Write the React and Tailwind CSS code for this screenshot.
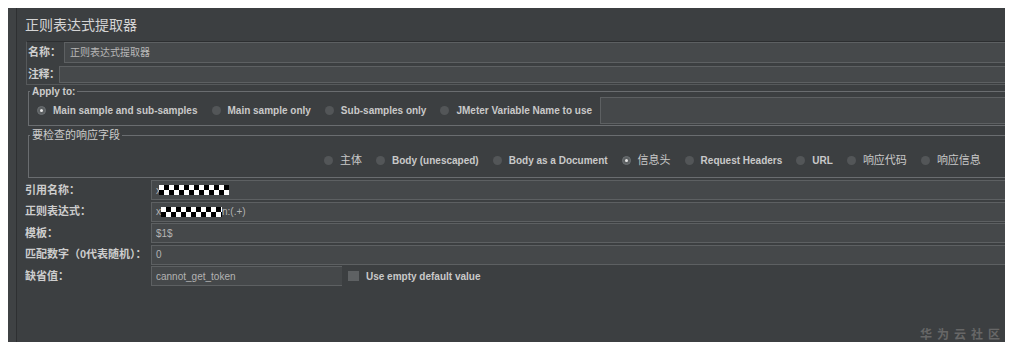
import React from "react";

function Radio({ checked }) {
  if (checked) {
    return (
      <span className="w-[9px] h-[9px] rounded-full bg-[#5c6062] border border-[#6c7073] flex items-center justify-center shrink-0">
        <span className="w-[3px] h-[3px] rounded-full bg-[#e6e6e6]" />
      </span>
    );
  }
  return <span className="w-[9px] h-[9px] rounded-full bg-[#535658] shrink-0" />;
}

function Opt({ checked, label, cjk, first }) {
  return (
    <div className={"flex items-center " + (first ? "" : "ml-[14px]")}>
      <Radio checked={checked} />
      <span
        className={
          "ml-[7px] text-[#c9c9c9] whitespace-nowrap " +
          (cjk ? "text-[11px]" : "text-[10px] font-bold")
        }
      >
        {label}
      </span>
    </div>
  );
}

function Checker({ w }) {
  return (
    <span
      className={
        "inline-block h-[10px] [background-image:conic-gradient(#000_25%,#fff_0_50%,#000_0_75%,#fff_0)] [background-size:10px_10px] " +
        w
      }
    />
  );
}

const inputCls =
  "h-[20px] bg-[#45484a] border border-r-0 border-[#5d6062] flex items-center pl-[4px] text-[10px] text-[#b3b3b3] whitespace-nowrap";

export default function App() {
  return (
    <div className="w-[1018px] h-[355px] bg-white pt-[8px] pl-[8px] relative overflow-hidden font-['Liberation_Sans','Noto_Sans_CJK_SC',sans-serif]">
      <div className="w-[997px] h-[334px] bg-[#3c3f41] flex">
        <div className="w-[9px] bg-[#3f4244] border-r border-[#2e3032]" />
        <div className="flex-1 flex flex-col min-w-0">
          <div className="h-[33px] pl-[8px] flex items-center text-[14px] text-[#d4d4d4] font-['Noto_Sans_CJK_SC',sans-serif]">
            正则表达式提取器
          </div>

          {/* name / comment box */}
          <div className="ml-[9px] border border-r-0 border-[#56595b] border-t-[#2c2e30] pb-[1px]">
            <div className="flex items-center h-[21px]">
              <span className="w-[37px] shrink-0 pl-[1px] text-[11px] font-bold text-[#cfcfcf] whitespace-nowrap">名称：</span>
              <div className="flex-1 h-[21px] bg-[#46494b] border border-r-0 border-[#5d6062] flex items-center pl-[5px] text-[10px] text-[#b8b8b8]">
                正则表达式提取器
              </div>
            </div>
            <div className="flex items-center h-[17px] mt-[3px]">
              <span className="w-[32px] shrink-0 pl-[1px] text-[11px] font-bold text-[#cfcfcf] whitespace-nowrap tracking-[-0.5px]">注释：</span>
              <div className="flex-1 h-[17px] bg-[#46494b] border border-r-0 border-[#5d6062]" />
            </div>
          </div>

          {/* Apply to */}
          <fieldset className="ml-[11px] mt-[1px] border border-r-0 border-[#6a6d70] pl-[1px]">
            <legend className="px-[2px] text-[10px] font-bold leading-[11px] text-[#cdcdcd]">Apply to:</legend>
            <div className="flex items-center h-[27px] pl-[7px] mb-[1px]">
              <Opt first checked label="Main sample and sub-samples" />
              <Opt label="Main sample only" />
              <Opt label="Sub-samples only" />
              <Opt label="JMeter Variable Name to use" />
              <div className="ml-[8px] flex-1 h-[27px] bg-[#45484a] border border-r-0 border-[#5d6062]" />
            </div>
          </fieldset>

          {/* response field */}
          <fieldset className="ml-[11px] mt-[4px] border border-r-0 border-[#6a6d70] pl-[1px]">
            <legend className="px-[2px] text-[11px] leading-[11px] text-[#cdcdcd]">要检查的响应字段</legend>
            <div className="flex items-center h-[36px] pt-[2px] pl-[294px]">
              <Opt first cjk label="主体" />
              <Opt label="Body (unescaped)" />
              <Opt label="Body as a Document" />
              <Opt checked cjk label="信息头" />
              <Opt label="Request Headers" />
              <Opt label="URL" />
              <Opt cjk label="响应代码" />
              <Opt cjk label="响应信息" />
            </div>
          </fieldset>

          {/* form rows */}
          <div className="ml-[8px] mt-[2px] grid grid-cols-[126px_1fr] gap-y-[1.5px] items-center">
            <span className="text-[11px] font-bold text-[#cdcdcd]">引用名称：</span>
            <div className={inputCls}>
              <span>x</span>
              <Checker w="w-[70px] -ml-[2px]" />
            </div>

            <span className="text-[11px] font-bold text-[#cdcdcd]">正则表达式：</span>
            <div className={inputCls}>
              <span>x</span>
              <Checker w="w-[61px]" />
              <span>n:(.+)</span>
            </div>

            <span className="text-[11px] font-bold text-[#cdcdcd]">模板：</span>
            <div className={inputCls}>$1$</div>

            <span className="text-[11px] font-bold text-[#cdcdcd] whitespace-nowrap">匹配数字（0代表随机）：</span>
            <div className={inputCls}>0</div>

            <span className="text-[11px] font-bold text-[#cdcdcd]">缺省值：</span>
            <div className="flex items-center">
              <div className={inputCls + " w-[191px] border-r"}>cannot_get_token</div>
              <span className="ml-[6px] w-[11px] h-[10px] bg-[#5e6163]" />
              <span className="ml-[7px] text-[10px] font-bold text-[#c9c9c9] whitespace-nowrap">
                Use empty default value
              </span>
            </div>
          </div>
        </div>
      </div>

      <div className="absolute left-[920px] top-[325px] text-[12px] font-bold tracking-[5px] text-[#676767] font-['Noto_Sans_CJK_SC',sans-serif]">
        华为云社区
      </div>
    </div>
  );
}
